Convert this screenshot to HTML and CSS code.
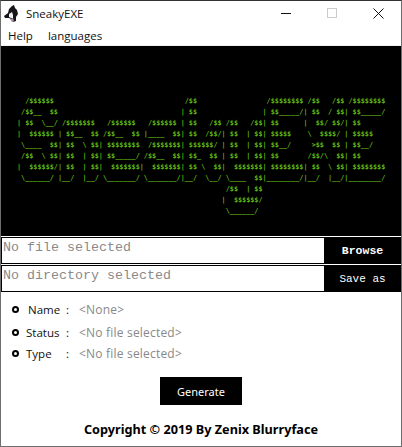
FILE: index.html
```html
<!DOCTYPE html>
<html lang="en">
<head>
    <meta charset="UTF-8">
    <meta name="viewport" content="width=device-width, initial-scale=1.0">
    <title>SneakyEXE</title>
    <link rel="stylesheet" href="styles.css">
</head>
<body>
    <div class="window">
        <div class="titlebar">
            <svg class="app-icon" width="14" height="18" viewBox="0 0 14 18">
                <path d="M0 11 L4 8 L5 4 L8 1 L10 0 L11 3 L13 5 L14 9 L12 12 L12 16 L9 17 L7 14 L5 13 L1 13 Z" fill="#17151a"/>
                <path d="M5 9 L8 7 L9 10 L9 13 L7 13 L5 12 Z" fill="#f2eff2"/>
                <path d="M6 14 L9 13 L10 16 L8 17 Z" fill="#a58aa5"/>
            </svg>
            <span class="app-name">SneakyEXE</span>
            <div class="win-controls">
                <span class="win-btn"><span class="win-min"></span></span>
                <span class="win-btn"><span class="win-max"></span></span>
                <span class="win-btn">
                    <svg width="11" height="11" viewBox="0 0 11 11"><path d="M0.5 0.5 L10.5 10.5 M10.5 0.5 L0.5 10.5" stroke="#111" fill="none"/></svg>
                </span>
            </div>
        </div>
        <div class="menubar">
            <span class="menu-item">Help</span>
            <span class="menu-item">languages</span>
        </div>
        <pre class="banner">  /$$$$$$                                /$$                 /$$$$$$$$ /$$   /$$ /$$$$$$$$
 /$$__  $$                              | $$                | $$_____/| $$  / $$| $$_____/
| $$  \__/ /$$$$$$$   /$$$$$$   /$$$$$$ | $$   /$$ /$$   /$$| $$      |  $$/ $$/| $$
|  $$$$$$ | $$__  $$ /$$__  $$ |____  $$| $$  /$$/| $$  | $$| $$$$$    \  $$$$/ | $$$$$
 \____  $$| $$  \ $$| $$$$$$$$  /$$$$$$$| $$$$$$/ | $$  | $$| $$__/     >$$  $$ | $$__/
 /$$  \ $$| $$  | $$| $$_____/ /$$__  $$| $$_  $$ | $$  | $$| $$       /$$/\  $$| $$
|  $$$$$$/| $$  | $$|  $$$$$$$|  $$$$$$$| $$ \  $$|  $$$$$$$| $$$$$$$$| $$  \ $$| $$$$$$$$
 \______/ |__/  |__/ \_______/ \_______/|__/  \__/ \____  $$|________/|__/  |__/|________/
                                                   /$$  | $$
                                                  |  $$$$$$/
                                                   \______/</pre>
        <div class="picker">
            <div class="picker-field">No file selected</div>
            <button class="picker-btn picker-btn-bold">Browse</button>
        </div>
        <div class="picker">
            <div class="picker-field">No directory selected</div>
            <button class="picker-btn">Save as</button>
        </div>
        <ul class="info">
            <li class="info-row info-row-name"><span class="info-dot"></span><span class="info-label">Name</span><span class="info-colon">:</span><span class="info-value">&lt;None&gt;</span></li>
            <li class="info-row"><span class="info-dot"></span><span class="info-label">Status</span><span class="info-colon">:</span><span class="info-value">&lt;No file selected&gt;</span></li>
            <li class="info-row"><span class="info-dot"></span><span class="info-label">Type</span><span class="info-colon">:</span><span class="info-value">&lt;No file selected&gt;</span></li>
        </ul>
        <div class="actions">
            <button class="generate">Generate</button>
        </div>
        <div class="copyright">Copyright © 2019 By Zenix Blurryface</div>
    </div>
</body>
</html>
```

FILE: styles.css
```css
body {
    margin: 0;
    background-color: #fff;
    font-family: "Open Sans", sans-serif;
}

.window {
    width: 402px;
    height: 447px;
    box-sizing: border-box;
    background-color: #fff;
    border: 1px solid #6e6e6e;
    border-top-color: #333;
    overflow: hidden;
}

.titlebar {
    height: 24px;
    display: flex;
    align-items: center;
    padding-left: 3px;
}

.app-icon {
    margin: 2px 8px 0 0;
}

.app-name {
    font-size: 11.5px;
    color: #111;
}

.win-controls {
    margin-left: auto;
    display: flex;
}

.win-btn {
    width: 46px;
    height: 24px;
    display: flex;
    align-items: center;
    justify-content: center;
}

.win-min {
    width: 10px;
    height: 1px;
    background-color: #111;
}

.win-max {
    width: 8px;
    height: 8px;
    border: 1px solid #ccc;
}

.menubar {
    height: 21px;
    box-sizing: border-box;
    display: flex;
    align-items: center;
    border-bottom: 1px solid #f0f0f0;
    font-size: 11.5px;
    color: #111;
}

.menu-item {
    padding: 0 7px;
    margin-right: 1px;
}

.banner {
    margin: 0 0 1px;
    height: 190px;
    box-sizing: border-box;
    padding: 50px 0 0 16px;
    background-color: #000;
    color: #5fb414;
    font-family: "DejaVu Sans Mono", monospace;
    font-size: 6.8px;
    font-weight: bold;
    line-height: 11px;
    overflow: hidden;
}

.picker {
    display: flex;
    height: 27px;
    box-sizing: border-box;
    margin-bottom: 1px;
    border: 1px solid #000;
    border-right: none;
}

.picker-field {
    flex: 1;
    padding: 2px 0 0 1px;
    font-family: "Liberation Mono", monospace;
    font-size: 13.33px;
    color: #8a8a8a;
}

.picker-btn {
    width: 77px;
    margin: -1px 0;
    border: none;
    background-color: #000;
    color: #fff;
    font-family: "Liberation Mono", monospace;
    font-size: 11px;
    padding: 0;
}

.picker-btn-bold {
    font-size: 11.5px;
    font-weight: bold;
}

.info {
    list-style: none;
    margin: 0;
    padding: 6px 0 0 11px;
    font-size: 11.5px;
}

.info-row {
    display: flex;
    align-items: center;
    height: 21px;
}

.info-row-name {
    margin-bottom: 2px;
}

.info-dot {
    width: 7px;
    height: 7px;
    box-sizing: border-box;
    border: 2px solid #000;
    border-radius: 50%;
    margin-right: 7px;
}

.info-label {
    width: 40px;
    color: #111;
}

.info-row-name .info-dot {
    margin-right: 9px;
}

.info-row-name .info-label {
    width: 38px;
}

.info-colon {
    width: 13px;
    color: #111;
}

.info-value {
    font-size: 12px;
    letter-spacing: 0.2px;
    color: #888;
}

.actions {
    display: flex;
    justify-content: center;
    margin-top: 13px;
}

.generate {
    width: 82px;
    height: 28px;
    border: none;
    background-color: #000;
    color: #fff;
    font-family: "Noto Sans", sans-serif;
    font-size: 11px;
}

.copyright {
    margin-top: 15px;
    text-align: center;
    font-family: "Noto Sans", sans-serif;
    font-size: 12.7px;
    font-weight: bold;
    color: #000;
}
```
